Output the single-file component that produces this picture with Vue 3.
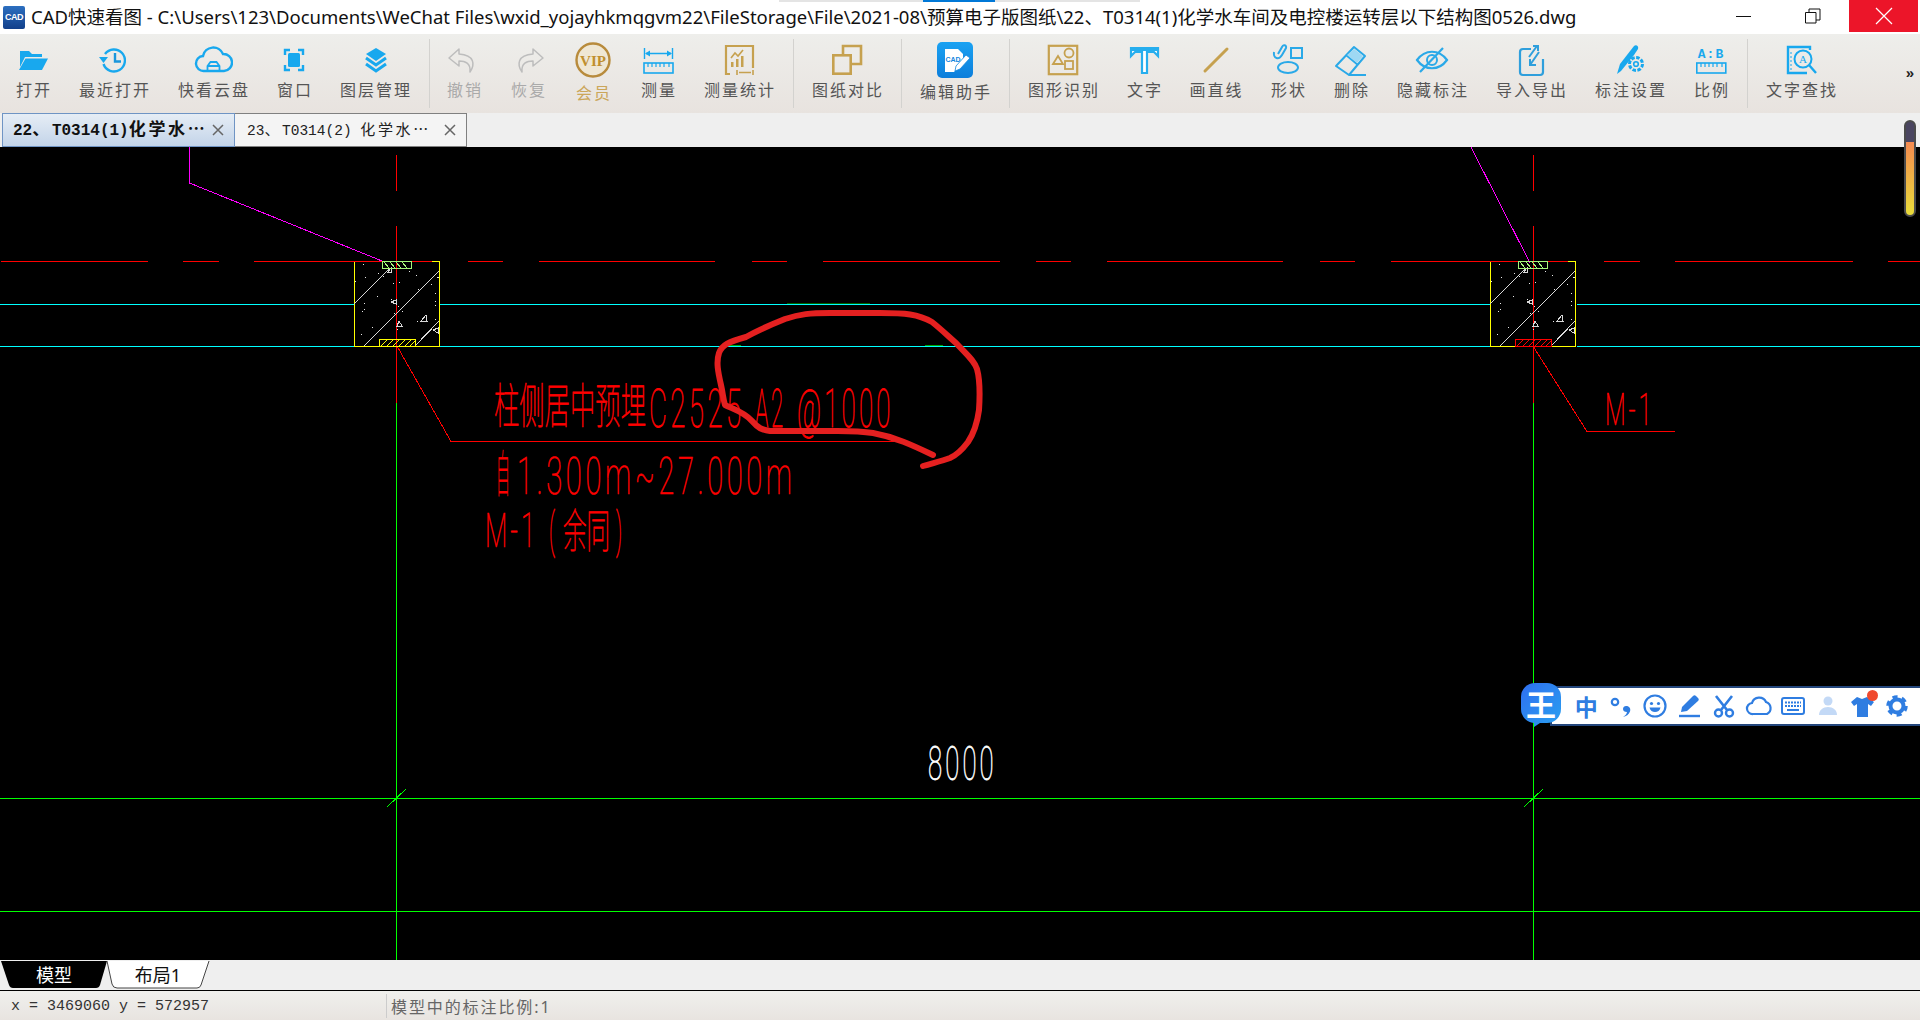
<template>
  <div class="app">
    <div class="taskbar-strip"><span class="strip-active"></span></div>

    <!-- title bar -->
    <div class="titlebar">
      <div class="app-logo">CAD</div>
      <div class="title-text">CAD快速看图 - C:\Users\123\Documents\WeChat Files\wxid_yojayhkmqgvm22\FileStorage\File\2021-08\预算电子版图纸\22、T0314(1)化学水车间及电控楼运转层以下结构图0526.dwg</div>
      <div class="win-btns">
        <div class="win-btn">
          <svg width="16" height="16" viewBox="0 0 16 16"><path d="M0 8.5h15" stroke="#111" fill="none" /></svg>
        </div>
        <div class="win-btn">
          <svg width="16" height="16" viewBox="0 0 16 16"><path d="M.5 4.5h10.5v10.5H.5zM4 4.5V1h11v11h-4" stroke="#111" fill="none" /></svg>
        </div>
        <div class="win-btn close">
          <svg width="18" height="18" viewBox="0 0 18 18"><path d="M1 1l16 16M17 1L1 17" stroke="#fff" stroke-width="1.2" fill="none" /></svg>
        </div>
      </div>
    </div>

    <!-- toolbar -->
    <div class="toolbar">
      <template v-for="(item, i) in tools" :key="i">
        <div v-if="item.sep" class="tool-sep" :style="{ marginLeft: item.ml + 'px' }"></div>
        <div v-else class="tool" :class="item.cls" :style="{ width: item.w + 'px' }">
          <svg class="tool-icon" width="40" height="40" viewBox="0 0 40 40" v-html="icons[item.icon]"></svg>
          <span class="tool-label">{{ item.label }}</span>
        </div>
      </template>
      <span class="more">»</span>
    </div>

    <!-- file tabs -->
    <div class="filetabs">
      <div class="filetab active">
        <span class="filetab-name">22<span class="cjk">、</span>T0314(1)<span class="cjk">化学水⋯</span></span>
        <svg class="filetab-x" width="14" height="14" viewBox="0 0 14 14"><path d="M2 2l10 10M12 2L2 12" stroke="#666" stroke-width="1.500" fill="none" /></svg>
      </div>
      <div class="filetab">
        <span class="filetab-name">23<span class="cjk">、</span>T0314(2) <span class="cjk">化学水⋯</span></span>
        <svg class="filetab-x" width="14" height="14" viewBox="0 0 14 14"><path d="M2 2l10 10M12 2L2 12" stroke="#666" stroke-width="1.500" fill="none" /></svg>
      </div>
    </div>

    <!-- drawing -->
    <div class="canvas">
      <svg class="drawing" viewBox="0 147 1920 813" width="1920" height="813">
        <g shape-rendering="crispEdges" fill="none" stroke-width="1">
          <line v-for="(l, i) in lines" :key="i" :x1="l[0]" :y1="l[1]" :x2="l[2]" :y2="l[3]" :stroke="l[4]" />
          <g v-for="col in columns" :key="col.dx" :transform="`translate(${col.dx} 0)`">
            <path d="M354.5 261.5V346.5H439.5V261.5H432" stroke="#ffff00" />
            <path d="M354 304L390 268M364 346L439 271M415 346L439 321" stroke="#d8d8d8" />
            <path v-for="(t, i) in triangles" :key="i" :d="t" stroke="#d8d8d8" />
            <rect v-for="(d, i) in dots" :key="i" :x="d[0]" :y="d[1]" width="1" height="1" fill="#e8e8e8" />
            <rect x="382.5" y="261.5" width="29" height="7" stroke="#a6f77a" />
            <path v-for="x in [384, 390, 396, 402]" :key="x" :d="`M${x} 262l5 6`" stroke="#a6f77a" />
            <rect x="379.5" y="339.5" width="36" height="7" :stroke="col.rebar" />
            <path v-for="x in [381, 387, 393, 399, 405, 410]" :key="x" :d="`M${x} 346l6-6`" :stroke="col.rebar" />
          </g>
        </g>

        <text
          v-for="t in cadTexts"
          :key="t.s + t.x"
          class="cad-text"
          :class="t.cls"
          :font-size="t.fs"
          :transform="`translate(${t.x} ${t.y}) scale(${t.sx} 1)`"
        >{{ t.s }}</text>

        <!-- hand drawn circle -->
        <path
          d="M933 455C912 445 895 437 873 433C855 430 840 431 820 431L770 431C762 430 758 428 752 421C744 412 733 409 725 405C723 398 723 394 721 385C718 372 716 362 719 353C722 345 728 342 746 337C760 329 770 325 785 319C800 314 810 313 830 313L880 313C905 313 918 314 932 322C942 330 948 336 956 343C966 354 974 360 977 369C980 380 980 395 979 410C977 425 974 433 968 442C962 450 957 455 950 458C942 461 933 463 923 466"
          fill="none"
          stroke="#e42020"
          stroke-width="6"
          stroke-linecap="round"
          stroke-linejoin="round"
        />
      </svg>

      <!-- input method bar -->
      <div class="ime">
        <div class="ime-logo">
          <span>王</span>
          <i class="ime-tail"></i>
        </div>
        <div class="ime-item ime-zh">中</div>
        <div class="ime-item">
          <svg width="26" height="26" viewBox="0 0 26 26"><circle cx="7" cy="9" r="3.200" fill="none" stroke="#2f7de1" stroke-width="2.200" /><path d="M18 13c3.500 0 5 2.500 4 5.500s-4 5-7 5.500c2-1.500 3.500-2.500 4-5-2.500 0-4-1.200-4-3s1.500-3 3-3z" fill="#2f7de1" /></svg>
        </div>
        <div class="ime-item">
          <svg width="26" height="26" viewBox="0 0 26 26"><circle cx="13" cy="13" r="10.500" fill="none" stroke="#2f7de1" stroke-width="2.200" /><circle cx="9.500" cy="10.500" r="1.600" fill="#2f7de1" /><circle cx="16.500" cy="10.500" r="1.600" fill="#2f7de1" /><path d="M7.500 14.500c1 6 10 6 11 0z" fill="#2f7de1" /></svg>
        </div>
        <div class="ime-item">
          <svg width="26" height="26" viewBox="0 0 26 26"><path d="M4 19l1-5L16 3c1-1 2-1 3 0l2 2c1 1 1 2 0 3L10 18z" fill="#2f7de1" /><path d="M2 23h21" stroke="#2f7de1" stroke-width="2.400" /></svg>
        </div>
        <div class="ime-item">
          <svg width="26" height="26" viewBox="0 0 26 26"><path d="M5 3l11 14M21 3L10 17" stroke="#2f7de1" stroke-width="2.600" fill="none" /><circle cx="7.500" cy="20" r="3.500" fill="none" stroke="#2f7de1" stroke-width="2.400" /><circle cx="18.500" cy="20" r="3.500" fill="none" stroke="#2f7de1" stroke-width="2.400" /></svg>
        </div>
        <div class="ime-item">
          <svg width="28" height="26" viewBox="0 0 28 26"><path d="M8 21a5.500 5.500 0 0 1-1-11 7.500 7.500 0 0 1 14-1 6.500 6.500 0 0 1 1 12z" fill="none" stroke="#2f7de1" stroke-width="2.200" /></svg>
        </div>
        <div class="ime-item">
          <svg width="26" height="26" viewBox="0 0 26 26"><rect x="2" y="5" width="22" height="16" rx="2" fill="none" stroke="#2f7de1" stroke-width="2" /><path d="M5 9.500h16M5 13h16" stroke="#2f7de1" stroke-width="2" stroke-dasharray="2 1" /><path d="M7 17h12" stroke="#2f7de1" stroke-width="2" /></svg>
        </div>
        <div class="ime-item">
          <svg width="26" height="26" viewBox="0 0 26 26"><circle cx="13" cy="8" r="4.500" fill="#c3d9f6" /><path d="M4 22c0-5 4-8 9-8s9 3 9 8z" fill="#c3d9f6" /></svg>
        </div>
        <div class="ime-item ime-shirt">
          <svg width="26" height="26" viewBox="0 0 26 26"><path d="M8 4l5 2 5-2 7 5-3 4-3-2v13H8V11l-3 2-3-4z" fill="#2f7de1" /></svg>
          <i class="ime-dot"></i>
        </div>
        <div class="ime-item">
          <svg width="26" height="26" viewBox="0 0 26 26"><circle cx="13" cy="13" r="6.500" fill="none" stroke="#2f7de1" stroke-width="4" /><circle cx="13" cy="13" r="9" fill="none" stroke="#2f7de1" stroke-width="3.500" stroke-dasharray="5 4.420" /></svg>
        </div>
      </div>
    </div>

    <!-- overlay scroller -->
    <div class="scroller"><span class="scroller-fill"></span></div>

    <!-- sheet tabs -->
    <div class="sheets">
      <div class="sheet model">
        <svg width="106" height="28" viewBox="0 0 106 28"><path d="M0 0H106L99 24Q98 27 95 27H12Q9 27 8 24Z" fill="#000" /></svg>
        <span>模型</span>
      </div>
      <div class="sheet layout">
        <svg width="103" height="29" viewBox="0 0 103 29"><path d="M0 0L5 23Q6 27 10 27H90Q93 27 94 24L102 0" fill="#fff" stroke="#444" /></svg>
        <span>布局1</span>
      </div>
    </div>

    <!-- status bar -->
    <div class="statusbar">
      <span class="coords">x = 3469060 y = 572957</span>
      <span class="status-sep"></span>
      <span class="status-scale">模型中的标注比例:1</span>
    </div>
  </div>
</template>

<script setup>
const BLUE = '#18a8ee'
const GOLD = '#c6a14f'

const icons = {
  open: `<path d="M7 11h9l3 3h10v3H12L7 27z" fill="${BLUE}"/><path d="M12.500 18.500H35l-6 11.500H6z" fill="${BLUE}"/>`,
  recent: `<path d="M11 14a11 11 0 1 1-1.500 10" fill="none" stroke="${BLUE}" stroke-width="2.400"/><path d="M5 17h9l-4.500 6z" fill="${BLUE}"/><path d="M21 13v8.500h6" fill="none" stroke="#1a96dc" stroke-width="2.400"/>`,
  cloud: `<path d="M11 31a7.500 7.500 0 0 1-1-15 10.500 10.500 0 0 1 20-2 8.500 8.500 0 0 1 1 17z" fill="none" stroke="${BLUE}" stroke-width="2.400"/><path d="M14.500 31v-5l3-4h6l3 4v5zM14.500 26h12" fill="none" stroke="${BLUE}" stroke-width="1.800"/>`,
  window: `<path d="M11 15v-5h5M24 10h5v5M29 25v5h-5M16 30h-5v-5" fill="none" stroke="${BLUE}" stroke-width="2.400"/><rect x="14" y="13" width="12" height="14" rx="1.500" fill="${BLUE}"/>`,
  layers: `<path d="M21 8l10 6-10 7-10-7z" fill="${BLUE}"/><path d="M11 18l10 7 10-7M11 24l10 7 10-7" fill="none" stroke="${BLUE}" stroke-width="3"/>`,
  undo: `<path d="M15 9L5 18l10 8v-5c6 0 12 2 11 11 5-7 5-17-11-18z" fill="none" stroke="#bdbdbd" stroke-width="1.500" stroke-linejoin="round"/>`,
  redo: `<path d="M25 9l10 9-10 8v-5c-6 0-12 2-11 11-5-7-5-17 11-18z" fill="none" stroke="#bdbdbd" stroke-width="1.500" stroke-linejoin="round"/>`,
  vip: `<circle cx="20" cy="20" r="16.500" fill="#efe7d4" stroke="#b88b3c" stroke-width="2.400"/><text x="20" y="25.500" text-anchor="middle" font-family="Liberation Serif" font-weight="700" font-size="15" fill="#c08f2e">VIP</text>`,
  measure: `<path d="M6.500 8v11M34.500 8v11M8 13.500h25" fill="none" stroke="${BLUE}" stroke-width="1.400"/><path d="M7 13.500l5-3v6zM34 13.500l-5-3v6z" fill="${BLUE}"/><rect x="6" y="23" width="29" height="10" fill="none" stroke="${BLUE}" stroke-width="1.600"/><path d="M10 23v4M14 23v4M18 23v4M22 23v4M26 23v4M31 23v4" stroke="${BLUE}" stroke-width="1.200"/>`,
  stat: `<path d="M11 34H7V6h27v22" fill="none" stroke="${GOLD}" stroke-width="2.200"/><path d="M12 18l4-5 3 3 5-6" fill="none" stroke="${GOLD}" stroke-width="1.600"/><path d="M12 27v-5h2.500v5zM17 27v-8h2.500v8zM22 27v-11h2.500v11z" fill="${GOLD}"/><path d="M18 30v5M34 30v5M20 32.500h12" stroke="${GOLD}" stroke-width="1.600" fill="none"/>`,
  compare: `<path d="M16 14V6h18v18h-10" fill="none" stroke="${GOLD}" stroke-width="2.600"/><rect x="6.300" y="15.300" width="17.400" height="18.400" fill="none" stroke="${GOLD}" stroke-width="2.600"/>`,
  edit: `<defs><linearGradient id="eg" x1="0" y1="0" x2="0" y2="1"><stop offset="0" stop-color="#1aa2f2"/><stop offset="1" stop-color="#0c7edb"/></linearGradient></defs><rect x="2" y="2" width="36" height="36" rx="5" fill="url(#eg)"/><path d="M10 9h13l5 5v7l-9 11H10z" fill="#fff"/><text x="10.500" y="22" font-family="Liberation Sans" font-weight="700" font-size="7" fill="#1186de">CAD</text><path d="M20 31l1-5 10-11 4 3-10 11z" fill="#fff" stroke="#1186de" stroke-width=".8"/>`,
  shapes: `<rect x="5.800" y="5.800" width="28.400" height="28.400" fill="none" stroke="${GOLD}" stroke-width="2.200"/><path d="M10 24l5-8 5 8z" fill="none" stroke="${GOLD}" stroke-width="1.800"/><circle cx="26" cy="13" r="4.500" fill="none" stroke="${GOLD}" stroke-width="1.800"/><rect x="22" y="21" width="8" height="8" fill="none" stroke="${GOLD}" stroke-width="1.800"/>`,
  text: `<path d="M7 8h27v8l-4-4h-7v21h-5V12h-7l-4 4z" fill="#fff" stroke="#26aeee" stroke-width="2.200"/><path d="M7 8h27v3H7z" fill="#26aeee"/>`,
  line: `<path d="M9 31L31 9" stroke="${GOLD}" stroke-width="3" stroke-linecap="round" fill="none"/>`,
  shape: `<rect x="23" y="8" width="11" height="10" fill="none" stroke="#2aa9e8" stroke-width="2"/><ellipse cx="20" cy="27.500" rx="10" ry="5.500" fill="none" stroke="#2aa9e8" stroke-width="2"/><path d="M6 12c-1 7 5 8 8 3l4-7c1-3-3-4-4-1l-4 7" fill="none" stroke="#2aa9e8" stroke-width="2"/>`,
  erase: `<path d="M23 7l11 9-16 19-13-9z" fill="none" stroke="#2aa9e8" stroke-width="2" stroke-linejoin="round"/><path d="M15 15l12 10" stroke="#2aa9e8" stroke-width="2"/><path d="M23 9l9 7-6 7-10-8z" fill="#9ed8f3"/><path d="M18 35h17" stroke="#2aa9e8" stroke-width="2"/>`,
  eye: `<path d="M5 20c8-11 22-11 30 0-8 11-22 11-30 0z" fill="none" stroke="#2aa9e8" stroke-width="2.200"/><circle cx="20" cy="20" r="5" fill="none" stroke="#2aa9e8" stroke-width="2"/><path d="M31 8L8 32" stroke="#2aa9e8" stroke-width="2.200"/>`,
  io: `<path d="M20 9h-8a3 3 0 0 0-3 3v20a3 3 0 0 0 3 3h17a3 3 0 0 0 3-3V19" fill="none" stroke="#2f9fdc" stroke-width="2.200"/><path d="M18 17l8-11M22 6h5v5M28 12l-9 13M19 19v6h6" fill="none" stroke="#2f9fdc" stroke-width="2"/>`,
  label: `<path d="M7 34l3-10L24 6c2-2 5 0 4 3l-4 6-13 16z" fill="${BLUE}"/><circle cx="26" cy="24" r="6.500" fill="#ece9e5" stroke="${BLUE}" stroke-width="3" stroke-dasharray="3.500 1.500"/><circle cx="26" cy="24" r="2.300" fill="none" stroke="${BLUE}" stroke-width="1.600"/>`,
  ratio: `<text x="20" y="18" text-anchor="middle" font-family="Liberation Mono" font-weight="700" font-size="13" letter-spacing="1" fill="${BLUE}">A:B</text><rect x="5.800" y="23" width="29" height="10" fill="none" stroke="${BLUE}" stroke-width="1.600"/><path d="M10 23v4M14 23v4M18 23v4M22 23v4M26 23v4M31 23v4" stroke="${BLUE}" stroke-width="1.200"/>`,
  find: `<path d="M29 10V7H7v26h19" fill="none" stroke="${BLUE}" stroke-width="2.400"/><circle cx="22" cy="19" r="8.500" fill="none" stroke="${BLUE}" stroke-width="2"/><text x="22" y="23" text-anchor="middle" font-family="Liberation Serif" font-size="11" fill="${BLUE}">A</text><path d="M28 25l7 8" stroke="${BLUE}" stroke-width="2.400"/><path d="M10 12v18" stroke="${BLUE}" stroke-width="1" stroke-dasharray="2 2"/>`
}

const tools = [
  { label: '打开', icon: 'open', w: 66 },
  { label: '最近打开', icon: 'recent', w: 96 },
  { label: '快看云盘', icon: 'cloud', w: 102 },
  { label: '窗口', icon: 'window', w: 60 },
  { label: '图层管理', icon: 'layers', w: 102 },
  { sep: true, ml: 3 },
  { label: '撤销', icon: 'undo', w: 68, cls: 'off' },
  { label: '恢复', icon: 'redo', w: 60, cls: 'off' },
  { label: '会员', icon: 'vip', w: 70, cls: 'vip' },
  { label: '测量', icon: 'measure', w: 60 },
  { label: '测量统计', icon: 'stat', w: 102 },
  { sep: true, ml: 3 },
  { label: '图纸对比', icon: 'compare', w: 106 },
  { sep: true, ml: 1 },
  { label: '编辑助手', icon: 'edit', w: 106, cls: 'low' },
  { sep: true, ml: 1 },
  { label: '图形识别', icon: 'shapes', w: 106 },
  { label: '文字', icon: 'text', w: 56 },
  { label: '画直线', icon: 'line', w: 87 },
  { label: '形状', icon: 'shape', w: 58 },
  { label: '删除', icon: 'erase', w: 68 },
  { label: '隐藏标注', icon: 'eye', w: 94 },
  { label: '导入导出', icon: 'io', w: 104 },
  { label: '标注设置', icon: 'label', w: 94 },
  { label: '比例', icon: 'ratio', w: 68 },
  { sep: true, ml: 2 },
  { label: '文字查找', icon: 'find', w: 106 }
]

// drawing texts are squeezed horizontally like the CAD font
const cadTexts = [
  { s: '柱侧居中预埋', x: 494, y: 423, fs: 48, sx: 0.528, cls: 'cjk' },
  { s: 'C2525', x: 649, y: 427, fs: 53, sx: 0.524, cls: 'num' },
  { s: 'A2', x: 755, y: 427, fs: 53, sx: 0.42, cls: 'num' },
  { s: '@1000', x: 797, y: 427, fs: 53, sx: 0.49, cls: 'num' },
  { s: '自', x: 496, y: 492, fs: 50, sx: 0.28, cls: 'cjk' },
  { s: '1.300m~27.000m', x: 517, y: 494, fs: 52, sx: 0.563, cls: 'num' },
  { s: 'M-1', x: 485, y: 547, fs: 48, sx: 0.54, cls: 'num' },
  { s: '(', x: 549, y: 547, fs: 48, sx: 0.42, cls: 'num' },
  { s: '余同', x: 563, y: 547, fs: 46, sx: 0.51, cls: 'cjk' },
  { s: ')', x: 616, y: 547, fs: 48, sx: 0.42, cls: 'num' },
  { s: 'M-1', x: 1605, y: 425, fs: 45, sx: 0.534, cls: 'num' },
  { s: '8000', x: 928, y: 780, fs: 49, sx: 0.526, cls: 'num white' }
]

const RED = '#ff0000'
const GREEN = '#00ff00'
const CYAN = '#00ffff'
const MAGENTA = '#ff00ff'

// dashed axis along the top of the columns, [from, to]
const axis = [
  [1, 148], [183, 219], [254, 432], [468, 503], [539, 715], [752, 787], [823, 1000],
  [1036, 1071], [1107, 1283], [1320, 1355], [1391, 1569], [1604, 1640], [1675, 1853], [1888, 1920]
]

const lines = [
  [0, 798.5, 1920, 798.5, GREEN],
  [0, 911.5, 1920, 911.5, GREEN],
  [396.5, 403, 396.5, 960, GREEN],
  [1533.5, 403, 1533.5, 960, GREEN],
  [387, 807, 406, 789, GREEN],
  [1524, 807, 1543, 789, GREEN],
  [787, 303.5, 870, 303.5, '#006000'],
  [729, 345.5, 741, 345.5, '#00a000'],
  [925, 345.5, 943, 345.5, '#00a000'],
  [0, 304.5, 354, 304.5, CYAN],
  [440, 304.5, 1490, 304.5, CYAN],
  [1577, 304.5, 1920, 304.5, CYAN],
  [0, 346.5, 354, 346.5, CYAN],
  [440, 346.5, 1490, 346.5, CYAN],
  [1577, 346.5, 1920, 346.5, CYAN],
  ...axis.map((a) => [a[0], 261.5, a[1], 261.5, RED]),
  [396.5, 155, 396.5, 191, RED],
  [396.5, 226, 396.5, 403, RED],
  [1533.5, 155, 1533.5, 191, RED],
  [1533.5, 226, 1533.5, 403, RED],
  [397, 346, 451, 441.5, RED],
  [451, 441.5, 894, 441.5, RED],
  [1533, 346, 1587, 431.5, RED],
  [1587, 431.5, 1675, 431.5, RED],
  [189.5, 147, 189.5, 183, MAGENTA],
  [189.5, 183, 382, 261, MAGENTA],
  [1471, 147, 1530, 263, MAGENTA]
]

const columns = [
  { dx: 0, rebar: '#ffff00' },
  { dx: 1136, rebar: '#ff0000' }
]

const triangles = [
  'M421 321L426 315L427 321Z',
  'M397 326L399 321L402 326Z',
  'M391 302L396 300L396 304Z',
  'M433 330L438 328L438 333Z',
  'M388 272L391 268L391 272Z'
]

// speckle of the concrete hatch, taken from the left column
const dots = [
  [610, 343], [616, 381], [585, 394], [655, 370], [668, 377], [700, 400], [718, 397], [748, 363],
  [769, 376], [830, 380], [835, 380], [814, 403], [775, 418], [652, 439], [826, 430], [826, 454],
  [826, 465], [613, 460], [605, 484], [613, 478], [703, 488], [727, 484], [715, 468], [694, 448],
  [637, 532], [604, 553], [712, 538], [772, 514], [826, 508]
].map((d) => [Math.round(160 + d[0] / 3), Math.round(150 + d[1] / 3)])
</script>

<style>
html,
body {
  margin: 0;
  overflow: hidden;
  background: #000;
}
</style>

<style scoped>
.app {
  position: relative;
  display: flex;
  flex-direction: column;
  width: 1920px;
  height: 1020px;
  overflow: hidden;
  font-family: "Noto Sans", "Noto Sans CJK SC", sans-serif;
}

.taskbar-strip {
  position: absolute;
  top: 0;
  left: 779px;
  width: 361px;
  height: 2px;
  background: #e4e4e4;
}

.strip-active {
  position: absolute;
  left: 144px;
  width: 72px;
  height: 2px;
  background: #0078d7;
}

.titlebar {
  display: flex;
  align-items: flex-start;
  height: 34px;
  flex: none;
  background: #fff;
}

.app-logo {
  flex: none;
  width: 22px;
  height: 23px;
  margin: 6px 0 0 3px;
  background: linear-gradient(#2c6fc0, #123f8a);
  border-radius: 2px;
  color: #fff;
  font: 700 9px/23px "Liberation Sans", sans-serif;
  text-align: center;
  letter-spacing: -0.5px;
  overflow: hidden;
}

.title-text {
  flex: none;
  margin-left: 6px;
  font-size: 18.5px;
  line-height: 34px;
  color: #111;
  white-space: nowrap;
  font-family: "Noto Sans", "Noto Sans CJK SC", sans-serif;
}

.win-btns {
  display: flex;
  margin-left: auto;
  margin-right: 2px;
}

.win-btn {
  display: flex;
  align-items: center;
  justify-content: center;
  width: 69px;
  height: 32px;
}

.win-btn.close {
  margin-left: 2px;
  background: #ec1529;
}

.toolbar {
  display: flex;
  align-items: flex-start;
  height: 79px;
  flex: none;
  background: linear-gradient(#eeeeeb, #e8e3df);
}

.tool {
  display: flex;
  flex-direction: column;
  align-items: center;
  flex: none;
  padding-top: 6px;
}

.tool-icon {
  display: block;
}

.tool-label {
  margin-top: -1px;
  font-size: 16px;
  line-height: 22px;
  letter-spacing: 2px;
  margin-right: -2px;
  color: #555;
  white-space: nowrap;
}

.tool.off .tool-label {
  color: #aaa;
}

.tool.vip .tool-label {
  margin-top: 2px;
  color: #cba65a;
}

.tool.low .tool-label {
  margin-top: 1px;
}

.tool-sep {
  flex: none;
  width: 1px;
  height: 69px;
  margin-top: 5px;
  background: #d3d2cf;
}

.more {
  margin: 30px 6px 0 auto;
  font: 700 15px/18px "Liberation Sans", sans-serif;
  color: #222;
}

.filetabs {
  display: flex;
  height: 34px;
  flex: none;
  background: #efefef;
  padding-left: 2px;
}

.filetab {
  display: flex;
  align-items: center;
  box-sizing: border-box;
  width: 232px;
  height: 34px;
  padding: 0 9px 0 12px;
  border: 1px solid #808080;
  border-left: none;
  background: #f4f4f4;
  color: #222;
}

.filetab.active {
  width: 233px;
  padding-left: 10px;
  border: 1px solid #6f94c4;
  background: linear-gradient(#e6edf5, #c3d4e9);
  color: #111;
}

.filetab-name {
  flex: 1;
  padding-top: 2px;
  font: 400 14.5px/30px "Liberation Mono", "Noto Sans CJK SC", monospace;
  white-space: nowrap;
}

.filetab-name .cjk {
  font-size: 15px;
  letter-spacing: 2.6px;
}

.active .filetab-name {
  font-size: 16px;
  font-weight: 700;
}

.active .filetab-name .cjk {
  font-size: 17px;
  letter-spacing: 2.7px;
}

.filetab-x {
  flex: none;
}

.canvas {
  position: relative;
  flex: 1;
  background: #000;
  overflow: hidden;
}

.drawing {
  display: block;
}

.cad-text {
  fill: #ff0000;
  stroke: #ff0000;
  stroke-width: 0.6px;
  vector-effect: non-scaling-stroke;
  font-weight: 100;
}

.cad-text.cjk {
  font-family: "Noto Sans CJK SC", sans-serif;
}

.cad-text.num {
  font-family: Roboto, "Liberation Sans", sans-serif;
  letter-spacing: 0.12em;
}

.cad-text.white {
  fill: #fff;
  stroke: #fff;
}

.ime {
  position: absolute;
  top: 539px;
  left: 1550px;
  right: 0;
  display: flex;
  align-items: center;
  box-sizing: border-box;
  height: 40px;
  padding-left: 17px;
  background: #fff;
  border: 2px solid #23467c;
  border-right: none;
}

.ime-logo {
  position: absolute;
  left: -31px;
  top: -5px;
  width: 40px;
  height: 40px;
  border-radius: 14px;
  background: linear-gradient(135deg, #2f6ff0, #2a9ef0);
  color: #fff;
  font: 700 30px/40px "Noto Sans CJK SC", sans-serif;
  text-align: center;
}

.ime-tail {
  position: absolute;
  left: 13px;
  bottom: -4px;
  width: 0;
  height: 0;
  border-top: 6px solid #2a8ff0;
  border-right: 9px solid transparent;
}

.ime-item {
  position: relative;
  display: flex;
  align-items: center;
  justify-content: center;
  flex: none;
  width: 34.5px;
  height: 36px;
}

.ime-zh {
  color: #2f7de1;
  font: 700 23px/36px "Noto Sans CJK SC", sans-serif;
}

.ime-dot {
  position: absolute;
  top: 2px;
  right: 2px;
  width: 11px;
  height: 11px;
  border-radius: 50%;
  background: #f0492e;
}

.scroller {
  position: absolute;
  top: 120px;
  left: 1904px;
  box-sizing: border-box;
  width: 12px;
  height: 97px;
  border: 2px solid #4b4b4b;
  border-radius: 6px;
  background: #4a4560;
  overflow: hidden;
}

.scroller-fill {
  display: block;
  height: 73px;
  margin-top: 20px;
  background: linear-gradient(#f58a50, #e9dc3a);
}

.sheets {
  display: flex;
  height: 31px;
  flex: none;
  padding: 1px 0 0 1px;
  box-sizing: border-box;
  background: #efefef;
  border-bottom: 1px solid #000;
}

.sheet {
  position: relative;
  display: flex;
  align-items: center;
  justify-content: center;
  height: 28px;
  font-size: 18px;
  line-height: 28px;
}

.sheet svg {
  position: absolute;
  left: 0;
  top: 0;
}

.sheet span {
  position: relative;
}

.sheet.model {
  width: 106px;
  color: #fff;
}

.sheet.layout {
  width: 102px;
  color: #111;
}

.statusbar {
  display: flex;
  align-items: center;
  height: 29px;
  flex: none;
  box-sizing: border-box;
  padding-left: 11px;
  background: linear-gradient(#f0f0ed, #e8e4e0);
}

.coords {
  width: 375px;
  padding-top: 2px;
  font: 400 15px/27px "Liberation Mono", monospace;
  color: #333;
  white-space: nowrap;
}

.status-sep {
  width: 1px;
  height: 24px;
  background: #ccc;
}

.status-scale {
  margin-left: 4px;
  font-size: 16px;
  letter-spacing: 1.9px;
  color: #666;
}
</style>
